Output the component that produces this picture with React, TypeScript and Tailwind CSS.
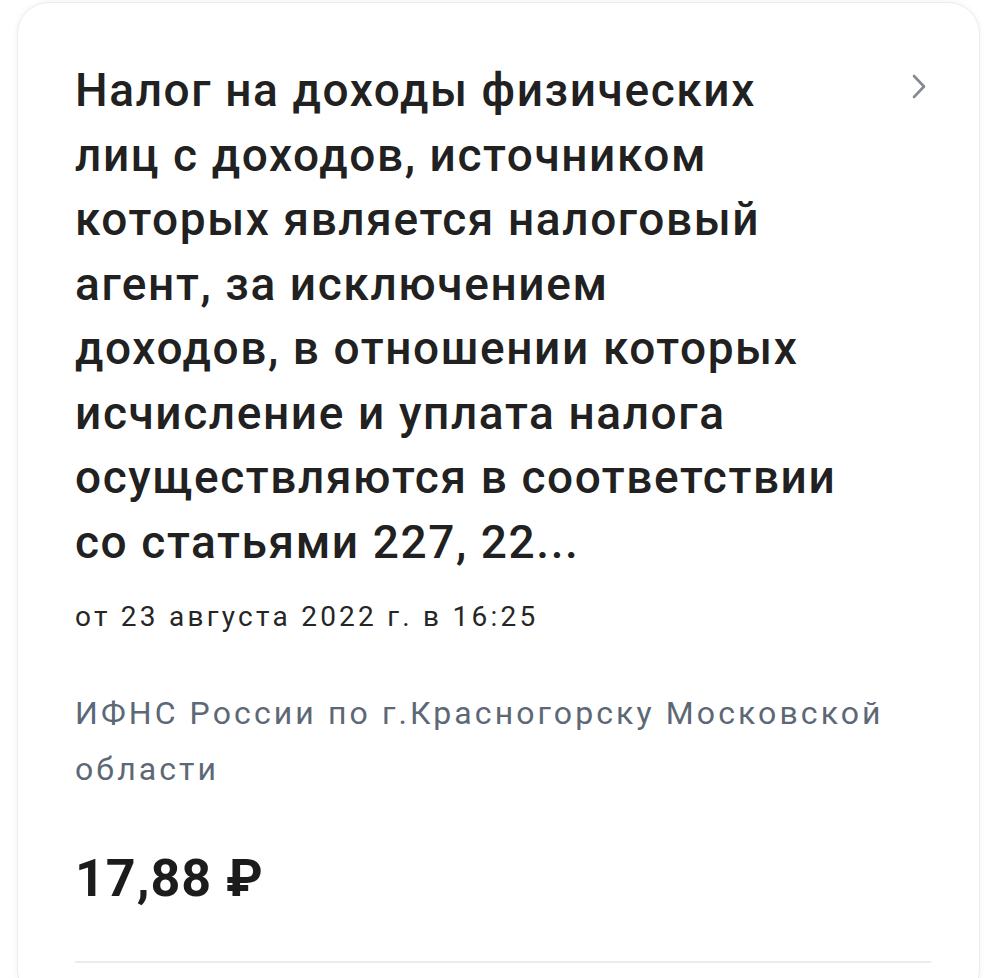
import React from "react";

const titleLines = [
  "Налог на доходы физических",
  "лиц с доходов, источником",
  "которых является налоговый",
  "агент, за исключением",
  "доходов, в отношении которых",
  "исчисление и уплата налога",
  "осуществляются в соответствии",
  "со статьями 227, 22...",
];

export default function App() {
  return (
    <div className="min-h-[978px] w-[1000px] overflow-hidden bg-white pt-[2px] pl-[17px] pr-[20px]" style={{ fontFamily: "Roboto, 'Noto Sans', sans-serif" }}>
      <div className="h-[1000px] rounded-[32px] border border-[#ececec] bg-white shadow-[0_0_6px_rgba(0,0,0,0.06)] pl-[57px] pr-[12px] pt-[55px]">
        <div className="flex items-start">
          <h1 className="w-[780px] shrink-0 text-[46px] font-medium leading-[64.5px] text-[#212121] tracking-[1.6px]">
            {titleLines.map((l, i) => (
              <span key={i} className="block whitespace-nowrap">{l}</span>
            ))}
          </h1>
          <div className="ml-[57px] mt-[16px]">
            <svg width="14" height="25" viewBox="0 0 14 25" fill="none">
              <path d="M2 2 L12 12.5 L2 23" stroke="#858a91" strokeWidth="2.6" strokeLinecap="round" strokeLinejoin="round" />
            </svg>
          </div>
        </div>
        <div className="mt-[23px] text-[28px] leading-[40px] text-[#262626] tracking-[3.25px]">от 23 августа 2022 г. в 16:25</div>
        <div className="mt-[48px] w-[880px] text-[32px] leading-[56px] text-[#5d6876] tracking-[3.1px]">
          ИФНС России по г.Красногорску Московской области
        </div>
        <div className="mt-[52px] text-[52px] font-bold leading-[60px] text-[#1c1c1c] tracking-[1px]">17,88 ₽</div>
        <div className="mt-[52px] w-[856px] h-[2px] bg-[#ececec]" />
      </div>
    </div>
  );
}
